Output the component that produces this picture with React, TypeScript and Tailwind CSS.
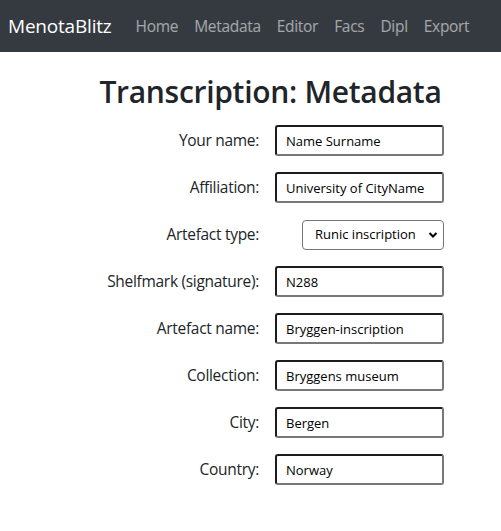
import React from 'react';

const font = { fontFamily: '"Open Sans", "Noto Sans", Arial, sans-serif' };

const fields: { label: string; value?: string; select?: string }[] = [
    { label: 'Your name:', value: 'Name Surname' },
    { label: 'Affiliation:', value: 'University of CityName' },
    { label: 'Artefact type:', select: 'Runic inscription' },
    { label: 'Shelfmark (signature):', value: 'N288' },
    { label: 'Artefact name:', value: 'Bryggen-inscription' },
    { label: 'Collection:', value: 'Bryggens museum' },
    { label: 'City:', value: 'Bergen' },
    { label: 'Country:', value: 'Norway' },
];

const App: React.FC = () => {
    return (
        <div className="min-h-screen bg-white text-[#212529] font-['Open_Sans',Arial,sans-serif]">
            {/* Navbar */}
            <nav className="h-[52px] bg-[#343a40] flex items-center px-2 pt-[1px]">
                <span className="text-[19px] text-white mr-4 tracking-[-0.2px]">MenotaBlitz</span>
                <div className="flex items-center">
                    {['Home', 'Metadata', 'Editor', 'Facs', 'Dipl', 'Export'].map(l => (
                        <a key={l} className="px-2 text-[15.5px] text-white/55 tracking-[-0.3px]">{l}</a>
                    ))}
                </div>
            </nav>

            <div className="ml-[97px] w-[347px]">
                <h1 className="text-[30px] font-semibold leading-none mt-[25px] mb-[18px] text-center tracking-[-0.3px]">Transcription: Metadata</h1>

                <div className="flex flex-col gap-4">
                    {fields.map(f => (
                        <div key={f.label} className="flex items-center h-[31px]">
                            <label className="flex-1 text-right text-[15.5px] pr-4 tracking-[-0.3px]">{f.label}</label>
                            <div className="w-[169px] flex justify-end">
                                {f.select ? (
                                    <div className="relative">
                                        <select
                                            defaultValue={f.select}
                                            style={font}
                                            className="appearance-none w-[142px] h-[30px] border border-[#767676] rounded-[4px] bg-white pl-[12px] text-[13px] text-black outline-none"
                                        >
                                            <option>{f.select}</option>
                                        </select>
                                        <svg className="absolute right-[6px] top-[11px] pointer-events-none" width="10" height="8" viewBox="0 0 10 8">
                                            <path d="M1.5 2 L5 5.5 L8.5 2" stroke="#000" strokeWidth="2" fill="none" />
                                        </svg>
                                    </div>
                                ) : (
                                    <input
                                        defaultValue={f.value}
                                        style={font}
                                        className="w-[169px] h-[31px] border-2 border-t-[#1c1c1c] border-l-[#1c1c1c] border-r-[#787878] border-b-[#787878] rounded-[3px] pl-[9px] text-[13px] text-black outline-none"
                                    />
                                )}
                            </div>
                        </div>
                    ))}
                </div>
            </div>
        </div>
    );
};

export default App;
